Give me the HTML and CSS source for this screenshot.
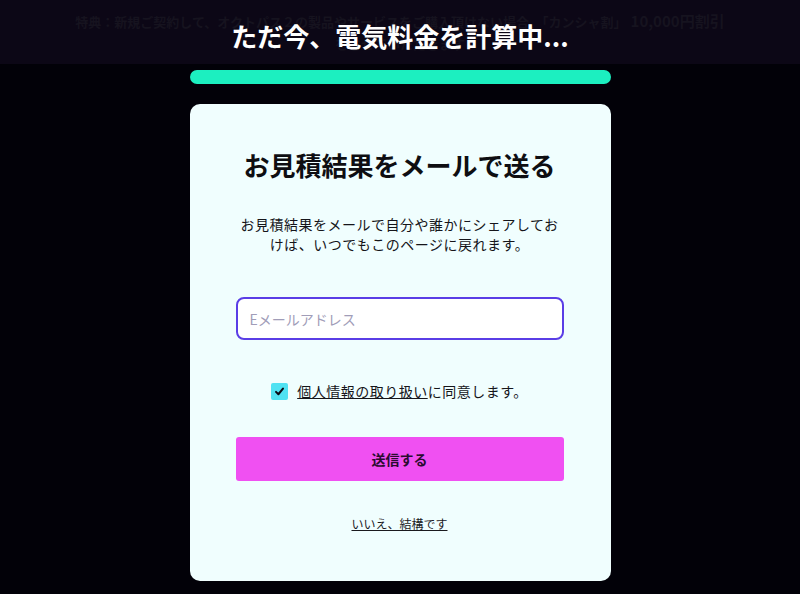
FILE: index.html
```html
<!DOCTYPE html>
<html lang="ja">
<head>
    <meta charset="UTF-8">
    <meta name="viewport" content="width=device-width, initial-scale=1.0">
    <title>お見積結果をメールで送る</title>
    <link rel="stylesheet" href="styles.css">
</head>
<body>
    <header class="top-band">
        <p class="promo">特典：新規ご契約して、オクトパス２の製品やサービスをご購入頂けない場合、「カンシャ割」<span class="promo-num">10,000円割引</span><br>をさせていただきます</p>
        <h1 class="loading-title">ただ今、電気料金を計算中...</h1>
    </header>

    <main class="content">
        <div class="progress"></div>

        <section class="card">
            <h2 class="card-title">お見積結果をメールで送る</h2>
            <p class="card-text">お見積結果をメールで自分や誰かにシェアしておけば、いつでもこのページに戻れます。</p>

            <form class="mail-form" onsubmit="return false;">
                <input type="email" class="mail-input" placeholder="Eメールアドレス">

                <label class="agree">
                    <span class="check-box">
                        <svg width="11" height="11" viewBox="0 0 12 12"><path d="M2.2 6.4 L4.8 9 L9.8 2.8" fill="none" stroke="#0a0a14" stroke-width="2.2" stroke-linecap="round" stroke-linejoin="round"/></svg>
                    </span>
                    <span><a href="#" class="agree-link">個人情報の取り扱い</a>に同意します。</span>
                </label>

                <button type="submit" class="send-button">送信する</button>
            </form>

            <a href="#" class="decline-link">いいえ、結構です</a>
        </section>
    </main>
</body>
</html>
```

FILE: styles.css
```css
body {
    margin: 0;
    background-color: #020108;
    font-family: 'Noto Sans CJK JP', 'Noto Sans', sans-serif;
    color: #111;
}

.top-band {
    position: relative;
    height: 64px;
    background-color: #0c0716;
    overflow: hidden;
}

.promo {
    margin: 0;
    padding-top: 10px;
    text-align: center;
    font-size: 13px;
    font-weight: 700;
    line-height: 22px;
    color: #16131f;
}

.promo-num {
    font-size: 15px;
    margin-left: 4px;
}

.loading-title {
    position: absolute;
    top: 0;
    left: 0;
    right: 0;
    margin: 0;
    line-height: 72px;
    text-align: center;
    font-size: 26px;
    font-weight: 700;
    color: #ffffff;
}

.content {
    width: 421px;
    margin: 0 auto;
    padding-top: 6px;
}

.progress {
    height: 14px;
    border-radius: 7px;
    background-color: #1cefc0;
}

.card {
    margin-top: 20px;
    padding: 42px 47px 47px 46px;
    background-color: #f0fefe;
    border-radius: 10px;
    text-align: center;
}

.card-title {
    margin: 0;
    font-size: 26px;
    line-height: 38px;
    font-weight: 700;
    color: #0e0e12;
}

.card-text {
    max-width: 324px;
    margin: 30px auto 0;
    font-size: 14px;
    line-height: 20px;
    letter-spacing: 0.5px;
    color: #15151a;
}

.mail-form {
    display: flex;
    flex-direction: column;
    margin-top: 43px;
}

.mail-input {
    box-sizing: border-box;
    height: 43px;
    padding: 0 12px;
    border: 2px solid #5a3ee6;
    border-radius: 8px;
    background-color: #ffffff;
    font-family: inherit;
    font-size: 14px;
    outline: none;
}

.mail-input::placeholder {
    color: #a19db8;
}

.agree {
    display: flex;
    justify-content: center;
    align-items: center;
    gap: 9px;
    margin-top: 41px;
    font-size: 14px;
    line-height: 20px;
    letter-spacing: 0.5px;
    color: #15151a;
}

.check-box {
    display: flex;
    justify-content: center;
    align-items: center;
    width: 17px;
    height: 17px;
    border-radius: 2px;
    background-color: #50e2f2;
}

.agree-link {
    color: #15151a;
    text-decoration: underline;
}

.send-button {
    height: 44px;
    margin-top: 36px;
    border: none;
    border-radius: 3px;
    background-color: #f050f2;
    font-family: inherit;
    font-size: 14px;
    font-weight: 700;
    color: #2a0c30;
}

.decline-link {
    display: inline-block;
    margin-top: 34px;
    font-size: 12px;
    line-height: 18px;
    color: #1a1a1e;
    text-decoration: underline;
}
```
